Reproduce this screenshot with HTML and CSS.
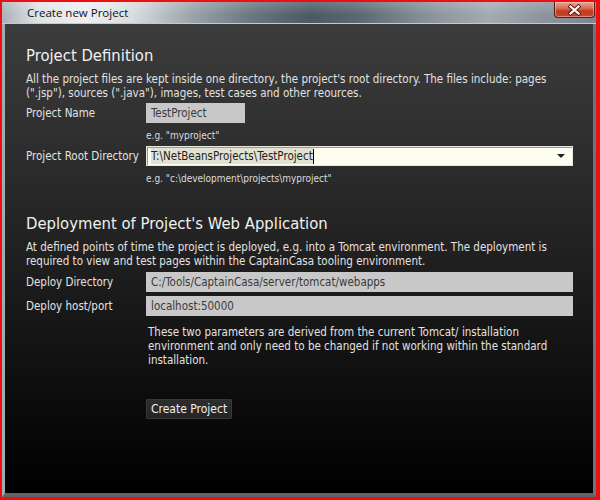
FILE: index.html
```html
<!DOCTYPE html>
<html>
<head>
<meta charset="utf-8">
<link rel="stylesheet" href="styles.css">
</head>
<body>
<div class="window">
  <div class="titlebar">
    <span class="title">Create new Project</span>
    <button class="close" aria-label="Close">
      <svg width="41" height="16" viewBox="0 0 41 16">
        <path d="M16.5 4.5 L24.5 11.5 M24.5 4.5 L16.5 11.5" stroke="#5a1a10" stroke-width="4" stroke-linecap="square" fill="none"/>
        <path d="M16.5 4.5 L24.5 11.5 M24.5 4.5 L16.5 11.5" stroke="#ffffff" stroke-width="2.2" stroke-linecap="square" fill="none"/>
      </svg>
    </button>
  </div>
  <div class="frame">
    <div class="content">
      <h1 class="heading">Project Definition</h1>
      <p class="desc">All the project files are kept inside one directory, the project's root directory. The files include: pages (".jsp"), sources (".java"), images, test cases and other reources.</p>
      <div class="row">
        <span class="label">Project Name</span>
        <div class="field short">TestProject</div>
      </div>
      <div class="hint">e.g. "myproject"</div>
      <div class="row">
        <span class="label">Project Root Directory</span>
        <div class="combo">
          <span class="combo-text"><span class="sel">T:\NetBeansProjects\TestProject</span><span class="caret"></span></span>
          <span class="arrow"></span>
        </div>
      </div>
      <div class="hint">e.g. "c:\development\projects\myproject"</div>

      <h1 class="heading second">Deployment of Project's Web Application</h1>
      <p class="desc">At defined points of time the project is deployed, e.g. into a Tomcat environment. The deployment is required to view and test pages within the CaptainCasa tooling environment.</p>
      <div class="row deploy">
        <span class="label">Deploy Directory</span>
        <div class="field">C:/Tools/CaptainCasa/server/tomcat/webapps</div>
      </div>
      <div class="row tight">
        <span class="label">Deploy host/port</span>
        <div class="field">localhost:50000</div>
      </div>
      <p class="note">These two parameters are derived from the current Tomcat/ installation environment and only need to be changed if not working within the standard installation.</p>
      <div class="actions">
        <button class="btn">Create Project</button>
      </div>
    </div>
  </div>
</div>
</body>
</html>
```

FILE: styles.css
```css
html, body {
  margin: 0;
  padding: 0;
}
body {
  width: 600px;
  height: 500px;
  background: #ee1010;
  overflow: hidden;
  font-family: "DejaVu Sans Condensed", "DejaVu Sans", sans-serif;
  font-stretch: condensed;
}
.window {
  margin: 2px 0 0 2px;
  width: 594px;
  height: 495px;
  display: flex;
  flex-direction: column;
}
.titlebar {
  height: 21px;
  border-bottom: 1px solid #c4cacf;
  display: flex;
  align-items: flex-start;
  background:
    linear-gradient(180deg, rgba(255,255,255,0.18), rgba(255,255,255,0) 60%),
    linear-gradient(90deg, #a9b0b6 0%, #dfe3e6 6%, #eef0f1 14%, #d9dde0 22%, #9aa3aa 32%, #6a7680 42%, #4c5a66 52%, #5c6872 60%, #8a939b 72%, #a3abb2 82%, #8e979f 90%, #7d868e 100%);
}
.title {
  font-family: "Open Sans", "Noto Sans", sans-serif;
  font-stretch: normal;
  font-size: 11.5px;
  line-height: 16px;
  color: #111;
  margin: 3px 0 0 25px;
}
.close {
  margin: 0 1px 0 auto;
  width: 41px;
  height: 16px;
  padding: 0;
  border: 1px solid #4a2218;
  border-top: none;
  border-radius: 0 0 4px 4px;
  background: linear-gradient(180deg, #e9a595 0%, #d9705c 40%, #c43a22 60%, #c9452c 100%);
  box-shadow: inset 0 0 0 1px rgba(255,220,210,0.45);
  display: flex;
  align-items: center;
  justify-content: center;
}
.close svg {
  display: block;
  margin: 0 -1px;
}
.frame {
  flex: 1;
  display: flex;
  border-left: 3px solid #a3abb2;
  border-right: 3px solid #6b7480;
  border-bottom: 4px solid #5d656d;
}
.content {
  flex: 1;
  padding: 22px 20px 0 21px;
  background: linear-gradient(180deg, #3c3c3c 0%, #2c2c2c 30%, #1c1c1c 55%, #0c0c0c 80%, #000 100%);
  color: #e2e2e2;
  font-size: 11.5px;
  line-height: 14px;
}
.heading {
  margin: 0;
  font-size: 16.5px;
  line-height: 20px;
  font-weight: normal;
  color: #f0f0f0;
}
.heading.second {
  margin-top: 29px;
}
.desc {
  margin: 6px 0 0 0;
}
.row {
  display: grid;
  grid-template-columns: 120px 1fr;
  align-items: center;
  margin-top: 3px;
}
.row.deploy {
  margin-top: 4px;
}
.row.tight {
  margin-top: 4px;
}
.label {
  color: #e2e2e2;
}
.field {
  height: 20px;
  line-height: 20px;
  background: #c8c8c8;
  color: #3a3a3a;
  padding: 0 5px;
}
.field.short {
  width: 89px;
}
.hint {
  margin: 7px 0 4px 120px;
  font-size: 10px;
  line-height: 12px;
  color: #dcdcdc;
}
.combo {
  height: 20px;
  box-sizing: border-box;
  border: 1px solid #e8e8e0;
  box-shadow: inset 1px 1px 0 #9a9a90;
  background: #fefef0;
  display: flex;
  align-items: center;
  padding: 0 4px 0 4px;
}
.combo-text {
  flex: 1;
  display: flex;
  align-items: center;
  color: #222;
}
.sel {
  background: #e2e2d4;
  line-height: 16px;
}
.caret {
  width: 1px;
  height: 15px;
  background: #000;
}
.arrow {
  width: 0;
  height: 0;
  border-left: 4px solid transparent;
  border-right: 4px solid transparent;
  border-top: 4px solid #222;
  margin-right: 3px;
}
.note {
  margin: 9px 0 0 122px;
  color: #e2e2e2;
}
.actions {
  margin: 32px 0 0 120px;
}
.btn {
  font-family: "DejaVu Sans Condensed", "DejaVu Sans", sans-serif;
  font-stretch: condensed;
  font-size: 12px;
  color: #f0f0f0;
  height: 20px;
  padding: 0 4px;
  background: linear-gradient(180deg, #2e2e2e, #242424);
  border: 1px solid #383838;
  border-radius: 1px;
}
```
